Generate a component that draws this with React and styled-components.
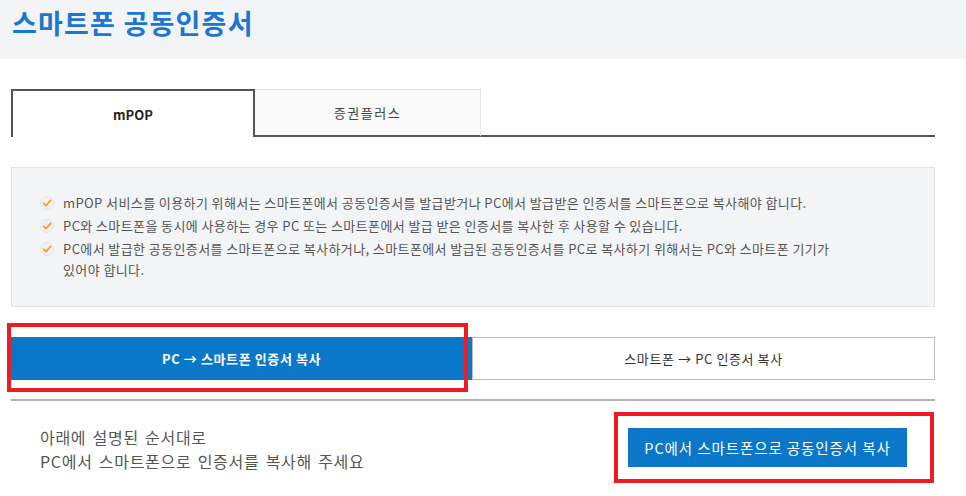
import React, { useState } from 'react'
import styled, { createGlobalStyle } from 'styled-components'

const Global = createGlobalStyle`
  html, body { margin: 0; padding: 0; background: #fff; }
  body {
    min-height: 100vh;
    font-family: "Noto Sans CJK KR", "Noto Sans", sans-serif;
  }
  * { box-sizing: border-box; }
`

const Page = styled.div`
  min-height: 100vh;
`
const Header = styled.div`
  height: 59px;
  background: #f2f4f6;
  padding: 4px 12px 0;
`
const Title = styled.h1`
  margin: 0;
  font-size: 27px;
  line-height: 38px;
  font-weight: 700;
  color: #1d76cf;
  letter-spacing: 1.2px;
`
const Content = styled.div`
  width: 924px;
  margin-left: 11px;
  padding: 30px 0 30px;
`
const TabBar = styled.div`
  display: flex;
  height: 48px;
`
const Tab = styled.div`
  display: flex;
  align-items: center;
  justify-content: center;
  width: ${p => p.w}px;
  font-size: 13px;
  letter-spacing: ${p => (p.active ? 0 : 1.5)}px;
  color: ${p => (p.active ? '#222' : '#444')};
  font-weight: ${p => (p.active ? 700 : 400)};
  background: ${p => (p.active ? '#fff' : '#f9f9f9')};
  border: ${p => (p.active ? '2px solid #555' : '1px solid #e6e6e6')};
  border-bottom: ${p => (p.active ? 'none' : '2px solid #555')};
  border-left: ${p => (p.active ? '2px solid #555' : 'none')};
  padding-bottom: ${p => (p.active ? 0 : 1)}px;
  cursor: pointer;
`
const TabFill = styled.div`
  flex: 1;
  border-bottom: 2px solid #555;
`
const InfoBox = styled.div`
  margin-top: 30px;
  height: 140px;
  background: #f3f4f6;
  border: 1px solid #e3e3e3;
  padding: 24px 0 0 28px;
`
const List = styled.ul`
  list-style: none;
  margin: 0;
  padding: 0;
`
const Item = styled.li`
  display: flex;
  align-items: flex-start;
  gap: 9px;
  margin-bottom: 2px;
  font-size: 13px;
  line-height: 21px;
  color: #555;
  letter-spacing: 0.4px;
`
const Check = styled.svg`
  flex: none;
  margin-top: 4px;
`
const Toggle = styled.div`
  display: flex;
  margin-top: 30px;
  height: 43px;
`
const ToggleBtn = styled.button`
  position: relative;
  flex: none;
  width: ${p => p.w}px;
  height: 43px;
  font-family: inherit;
  font-size: 13px;
  letter-spacing: 0.6px;
  font-weight: ${p => (p.active ? 700 : 400)};
  color: ${p => (p.active ? '#fff' : '#333')};
  background: ${p => (p.active ? '#0b77c9' : '#fff')};
  border: ${p => (p.active ? 'none' : '1px solid #bdbdbd')};
  cursor: pointer;
`
const Highlight = styled.div`
  position: absolute;
  top: ${p => p.t}px;
  left: ${p => p.l}px;
  right: ${p => p.r}px;
  bottom: ${p => p.b}px;
  border: 4px solid #ec1c24;
  pointer-events: none;
`
const Divider = styled.div`
  margin-top: 19px;
  height: 2px;
  background: #b0b0b0;
`
const Bottom = styled.div`
  display: flex;
  align-items: center;
  justify-content: space-between;
  padding: 24px 28px 0 29px;
`
const Guide = styled.p`
  margin: 0;
  font-size: 16px;
  line-height: 24px;
  color: #555;
  letter-spacing: 0.7px;
  word-spacing: 2px;
`
const CopyBtn = styled.button`
  position: relative;
  height: 39px;
  width: 279px;
  margin-bottom: 3px;
  background: #0b77c9;
  color: #fff;
  border: none;
  font-family: inherit;
  font-size: 14.5px;
  letter-spacing: 0.9px;
  cursor: pointer;
`

const CheckIcon = () => (
  <Check width="14" height="14" viewBox="0 0 14 14">
    <circle cx="7" cy="7" r="6.5" fill="#eef0f1" stroke="#e2e4e6" />
    <path d="M3.6 7.2 L6 9.6 L10.6 4.4" fill="none" stroke="#f29a2e" strokeWidth="1.6" strokeLinecap="round" strokeLinejoin="round" />
  </Check>
)

const notes = [
  'mPOP 서비스를 이용하기 위해서는 스마트폰에서 공동인증서를 발급받거나 PC에서 발급받은 인증서를 스마트폰으로 복사해야 합니다.',
  'PC와 스마트폰을 동시에 사용하는 경우 PC 또는 스마트폰에서 발급 받은 인증서를 복사한 후 사용할 수 있습니다.',
  <>PC에서 발급한 공동인증서를 스마트폰으로 복사하거나, 스마트폰에서 발급된 공동인증서를 PC로 복사하기 위해서는 PC와 스마트폰 기기가<br />있어야 합니다.</>,
]

const App = () => {
  const [tab, setTab] = useState(0)
  const [dir, setDir] = useState(0)
  return (
    <Page>
      <Global />
      <Header>
        <Title>스마트폰 공동인증서</Title>
      </Header>
      <Content>
        <TabBar>
          <Tab w={244} active={tab === 0} onClick={() => setTab(0)}>mPOP</Tab>
          <Tab w={226} active={tab === 1} onClick={() => setTab(1)}>증권플러스</Tab>
          <TabFill />
        </TabBar>
        <InfoBox>
          <List>
            {notes.map((n, i) => (
              <Item key={i}>
                <CheckIcon />
                <span>{n}</span>
              </Item>
            ))}
          </List>
        </InfoBox>
        <Toggle>
          <ToggleBtn w={461} active={dir === 0} onClick={() => setDir(0)}>
            PC → 스마트폰 인증서 복사
            <Highlight t={-14} l={-4} r={4} b={-12} />
          </ToggleBtn>
          <ToggleBtn w={463} active={dir === 1} onClick={() => setDir(1)}>
            스마트폰 → PC 인증서 복사
          </ToggleBtn>
        </Toggle>
        <Divider />
        <Bottom>
          <Guide>
            아래에 설명된 순서대로<br />
            PC에서 스마트폰으로 인증서를 복사해 주세요
          </Guide>
          <CopyBtn>
            PC에서 스마트폰으로 공동인증서 복사
            <Highlight t={-16} l={-14} r={-27} b={-16} />
          </CopyBtn>
        </Bottom>
      </Content>
    </Page>
  )
}

export default App
